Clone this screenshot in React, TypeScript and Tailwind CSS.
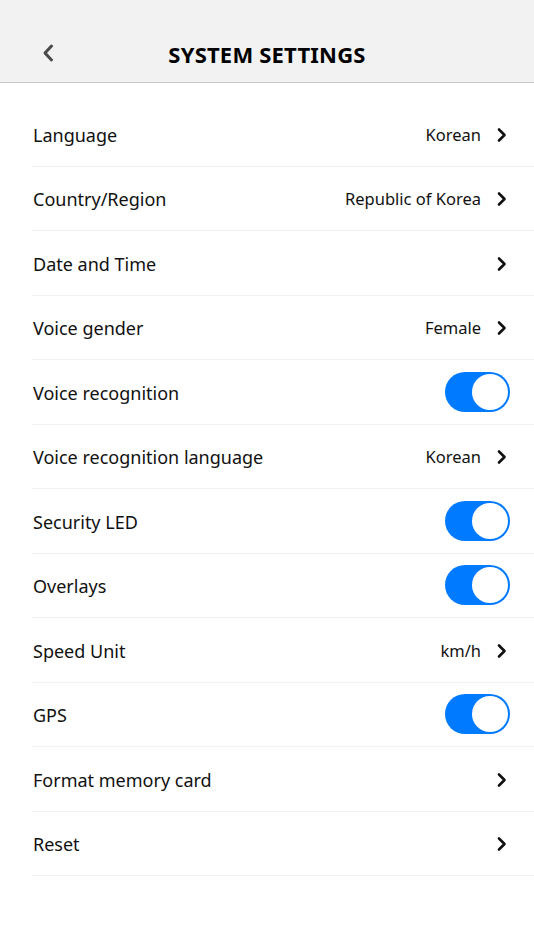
import React from "react"

type Row = { label: string; value?: string; toggle?: boolean }

const rows: Row[] = [
  { label: "Language", value: "Korean" },
  { label: "Country/Region", value: "Republic of Korea" },
  { label: "Date and Time", value: "" },
  { label: "Voice gender", value: "Female" },
  { label: "Voice recognition", toggle: true },
  { label: "Voice recognition language", value: "Korean" },
  { label: "Security LED", toggle: true },
  { label: "Overlays", toggle: true },
  { label: "Speed Unit", value: "km/h" },
  { label: "GPS", toggle: true },
  { label: "Format memory card", value: "" },
  { label: "Reset", value: "" },
]

function Chevron() {
  return (
    <svg width="12" height="16" viewBox="0 0 12 16" className="ml-[15px]">
      <path d="M3 2.5 L8.5 8 L3 13.5" fill="none" stroke="#111" strokeWidth="2.6" strokeLinecap="round" strokeLinejoin="round" />
    </svg>
  )
}

function Toggle() {
  return (
    <div className="w-[65px] h-[40px] rounded-full bg-[#007aff] p-[2px] flex justify-end">
      <div className="w-[36px] h-[36px] rounded-full bg-white" />
    </div>
  )
}

export default function App() {
  return (
    <main className="min-h-screen bg-white font-['Noto_Sans',sans-serif] text-[#111]">
      <header className="relative h-[83px] bg-[#f2f2f2] border-b border-[#c9c9c9] flex items-end justify-center pb-[17px]">
        <button className="absolute left-[38px] bottom-[18px] w-[20px] h-[22px] flex items-center justify-center">
          <svg width="14" height="20" viewBox="0 0 14 20">
            <path d="M10.5 3 L4 10 L10.5 17" fill="none" stroke="#4a4a4a" strokeWidth="3" strokeLinecap="round" strokeLinejoin="round" />
          </svg>
        </button>
        <h1 className="text-[22px] font-bold tracking-[0.2px] text-black leading-none">SYSTEM SETTINGS</h1>
      </header>

      <section className="pt-[19px] pl-[32px]">
        {rows.map((row) => (
          <div
            key={row.label}
            className="h-[64.5px] border-b border-[#f2f2f2] flex items-center justify-between pr-[26px]"
          >
            <span className="text-[18px] leading-none pl-px pt-[2px]">{row.label}</span>
            {row.toggle ? (
              <div className="-mr-[2px]">
                <Toggle />
              </div>
            ) : (
              <div className="flex items-center pt-[2px]">
                {row.value ? <span className="text-[16.5px] leading-none">{row.value}</span> : null}
                <Chevron />
              </div>
            )}
          </div>
        ))}
      </section>
    </main>
  )
}
